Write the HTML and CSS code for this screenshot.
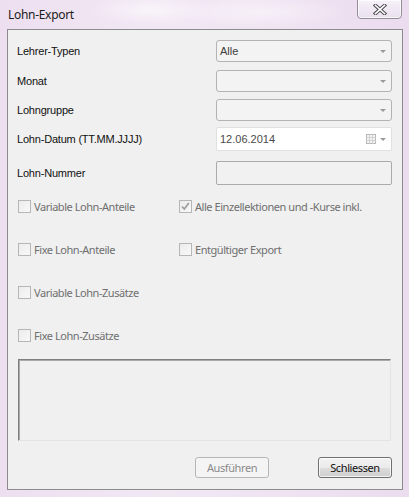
FILE: index.html
```html
<!DOCTYPE html>
<html lang="de">
<head>
<meta charset="utf-8">
<title>Lohn-Export</title>
<link rel="stylesheet" href="styles.css">
</head>
<body>
<div class="window">
  <header class="titlebar">
    <span class="title">Lohn-Export</span>
    <button class="close" type="button" aria-label="Schliessen">
      <svg width="14" height="11" viewBox="0 0 14 11">
        <path d="M2.5 1.5 L11.5 9.5 M11.5 1.5 L2.5 9.5" stroke="#4c4c50" stroke-width="3.6" stroke-linecap="square" fill="none"/>
        <path d="M2.5 1.5 L11.5 9.5 M11.5 1.5 L2.5 9.5" stroke="#ffffff" stroke-width="1.6" stroke-linecap="square" fill="none"/>
      </svg>
    </button>
  </header>

  <main class="panel">
    <div class="fields">
      <div class="row row-1">
        <label class="label">Lehrer-Typen</label>
        <div class="combo"><span class="value">Alle</span><i class="arrow"></i></div>
      </div>
      <div class="row row-2">
        <label class="label">Monat</label>
        <div class="combo"><span class="value"></span><i class="arrow"></i></div>
      </div>
      <div class="row row-3">
        <label class="label">Lohngruppe</label>
        <div class="combo"><span class="value"></span><i class="arrow"></i></div>
      </div>
      <div class="row row-4">
        <label class="label">Lohn-Datum (TT.MM.JJJJ)</label>
        <div class="date">
          <span class="value">12.06.2014</span>
          <svg class="cal" width="10" height="10" viewBox="0 0 10 10">
            <rect x="0.5" y="0.5" width="9" height="9" fill="#f4f4f4" stroke="#b9b9b9"/>
            <path d="M0.5 3.5 H9.5 M0.5 6.5 H9.5 M3.5 0.5 V9.5 M6.5 0.5 V9.5" stroke="#d2d2d2"/>
          </svg>
          <i class="arrow"></i>
        </div>
      </div>
      <div class="row row-5">
        <label class="label">Lohn-Nummer</label>
        <div class="textbox"></div>
      </div>
    </div>

    <div class="checks">
      <label class="check"><span class="box"></span>Variable Lohn-Anteile</label>
      <label class="check"><span class="box checked">
        <svg width="11" height="11" viewBox="0 0 11 11"><path d="M2 5.5 L4.3 8 L8.8 2" stroke="#9a9a9a" stroke-width="1.6" fill="none"/></svg>
      </span>Alle Einzellektionen und -Kurse inkl.</label>
      <label class="check"><span class="box"></span>Fixe Lohn-Anteile</label>
      <label class="check"><span class="box"></span>Entgültiger Export</label>
      <label class="check"><span class="box"></span>Variable Lohn-Zusätze</label>
      <span></span>
      <label class="check"><span class="box"></span>Fixe Lohn-Zusätze</label>
      <span></span>
    </div>

    <div class="log"></div>

    <div class="actions">
      <button class="btn" type="button" disabled>Ausführen</button>
      <button class="btn default" type="button">Schliessen</button>
    </div>
  </main>
</div>
</body>
</html>
```

FILE: styles.css
```css
html, body {
  margin: 0;
  padding: 0;
}

body {
  width: 409px;
  height: 497px;
  overflow: hidden;
  font-family: "Liberation Sans", Arial, sans-serif;
  font-size: 11px;
}

/* window frame: pale lavender glass */
.window {
  width: 409px;
  height: 497px;
  box-sizing: border-box;
  background:
    radial-gradient(ellipse 60px 14px at 150px 10px, rgba(255,255,255,0.55), rgba(255,255,255,0) 100%),
    radial-gradient(ellipse 90px 16px at 260px 12px, rgba(255,255,255,0.45), rgba(255,255,255,0) 100%),
    linear-gradient(90deg, #eddff0 0%, #f2e8f4 40%, #efe3f2 70%, #ebdcef 100%);
  display: flex;
  flex-direction: column;
}

.titlebar {
  height: 29px;
  display: flex;
  justify-content: space-between;
  align-items: flex-start;
}

.title {
  margin: 7px 0 0 8px;
  font-family: "Noto Sans", "Open Sans", sans-serif;
  font-size: 12px;
  letter-spacing: -0.3px;
  line-height: 15px;
  color: #1b1b1b;
}

.close {
  width: 45px;
  height: 20px;
  margin: -1px 7px 0 0;
  padding: 0;
  border: 1px solid #948e99;
  border-radius: 0 0 4px 4px;
  background: linear-gradient(#f6f1f8, #eae0ee);
  box-shadow: inset 0 0 0 1px rgba(255,255,255,0.7);
  display: flex;
  align-items: center;
  justify-content: center;
}

.close svg {
  display: block;
  margin-top: 1px;
}

/* client area */
.panel {
  margin-left: 7px;
  width: 396px;
  height: 461px;
  box-sizing: border-box;
  border: 1px solid #8c8b8e;
  background: #f0f0f0;
  display: flex;
  flex-direction: column;
}

.fields {
  padding: 10px 10px 0 9px;
}

.row {
  display: flex;
  align-items: flex-start;
}

.row-1 { height: 30px; }
.row-2 { height: 29px; }
.row-3 { height: 28px; }
.row-4 { height: 34px; }
.row-5 { height: 24px; }

.label {
  flex: 1;
  color: #111;
  line-height: 22px;
  letter-spacing: -0.2px;
}

.row-4 .label,
.row-5 .label {
  line-height: 24px;
}

.combo,
.date,
.textbox {
  width: 176px;
  box-sizing: border-box;
  display: flex;
  align-items: center;
}

.combo {
  height: 22px;
  border: 1px solid #b3b3b3;
  border-radius: 3px;
  background: #f3f3f3;
  padding: 0 4px 0 3px;
}

.value {
  flex: 1;
  color: #3d3d3d;
}

.arrow {
  width: 0;
  height: 0;
  border-left: 3.5px solid transparent;
  border-right: 3.5px solid transparent;
  border-top: 3.5px solid #9a9a9a;
  margin-right: 1px;
}

.date {
  height: 24px;
  border: 1px solid #e0e0e0;
  border-radius: 2px;
  background: #fff;
  padding: 0 4px 0 3px;
}

.date .value {
  color: #4a4a4a;
}

.cal {
  margin-right: 4px;
}

.textbox {
  height: 24px;
  border: 1px solid #ababab;
  border-radius: 2px;
  background: #f1f1f1;
}

/* option checkboxes */
.checks {
  margin-top: 15px;
  padding-left: 10px;
  display: grid;
  grid-template-columns: 161px 1fr;
  grid-auto-rows: 13px;
  row-gap: 30px;
}

.check {
  display: flex;
  align-items: center;
  gap: 3px;
  height: 13px;
  font-family: "Noto Sans", "Open Sans", sans-serif;
  font-size: 11px;
  letter-spacing: -0.45px;
  color: #6f6f6f;
  white-space: nowrap;
}

.box {
  width: 13px;
  height: 13px;
  box-sizing: border-box;
  border: 1px solid #b6b6b6;
  background: linear-gradient(135deg, #ececec, #f8f8f8);
  display: flex;
  align-items: center;
  justify-content: center;
  flex: none;
}

.box svg {
  display: block;
}

/* output area */
.log {
  margin: 17px 0 0 10px;
  width: 373px;
  height: 82px;
  box-sizing: border-box;
  border: 1px solid;
  border-color: #7f7f7f #e4e4e4 #e4e4e4 #7f7f7f;
  box-shadow: inset 1px 1px 0 #a9a9a9;
  background: #f0f0f0;
}

.actions {
  margin-top: 16px;
  padding-right: 10px;
  display: flex;
  justify-content: flex-end;
  gap: 49px;
}

.btn {
  width: 74px;
  height: 21px;
  padding: 0;
  font-family: "Noto Sans", "Open Sans", sans-serif;
  font-size: 11px;
  letter-spacing: -0.4px;
  color: #111;
  border: 1px solid #707070;
  border-radius: 3px;
  background: linear-gradient(#f2f2f2 0%, #ebebeb 50%, #dddddd 51%, #cfcfcf 100%);
  box-shadow: inset 0 0 0 1px rgba(255,255,255,0.75);
}

.btn:disabled {
  color: #8a8a8a;
  border-color: #b3b7ba;
  background: #f4f4f4;
  box-shadow: none;
}
```
